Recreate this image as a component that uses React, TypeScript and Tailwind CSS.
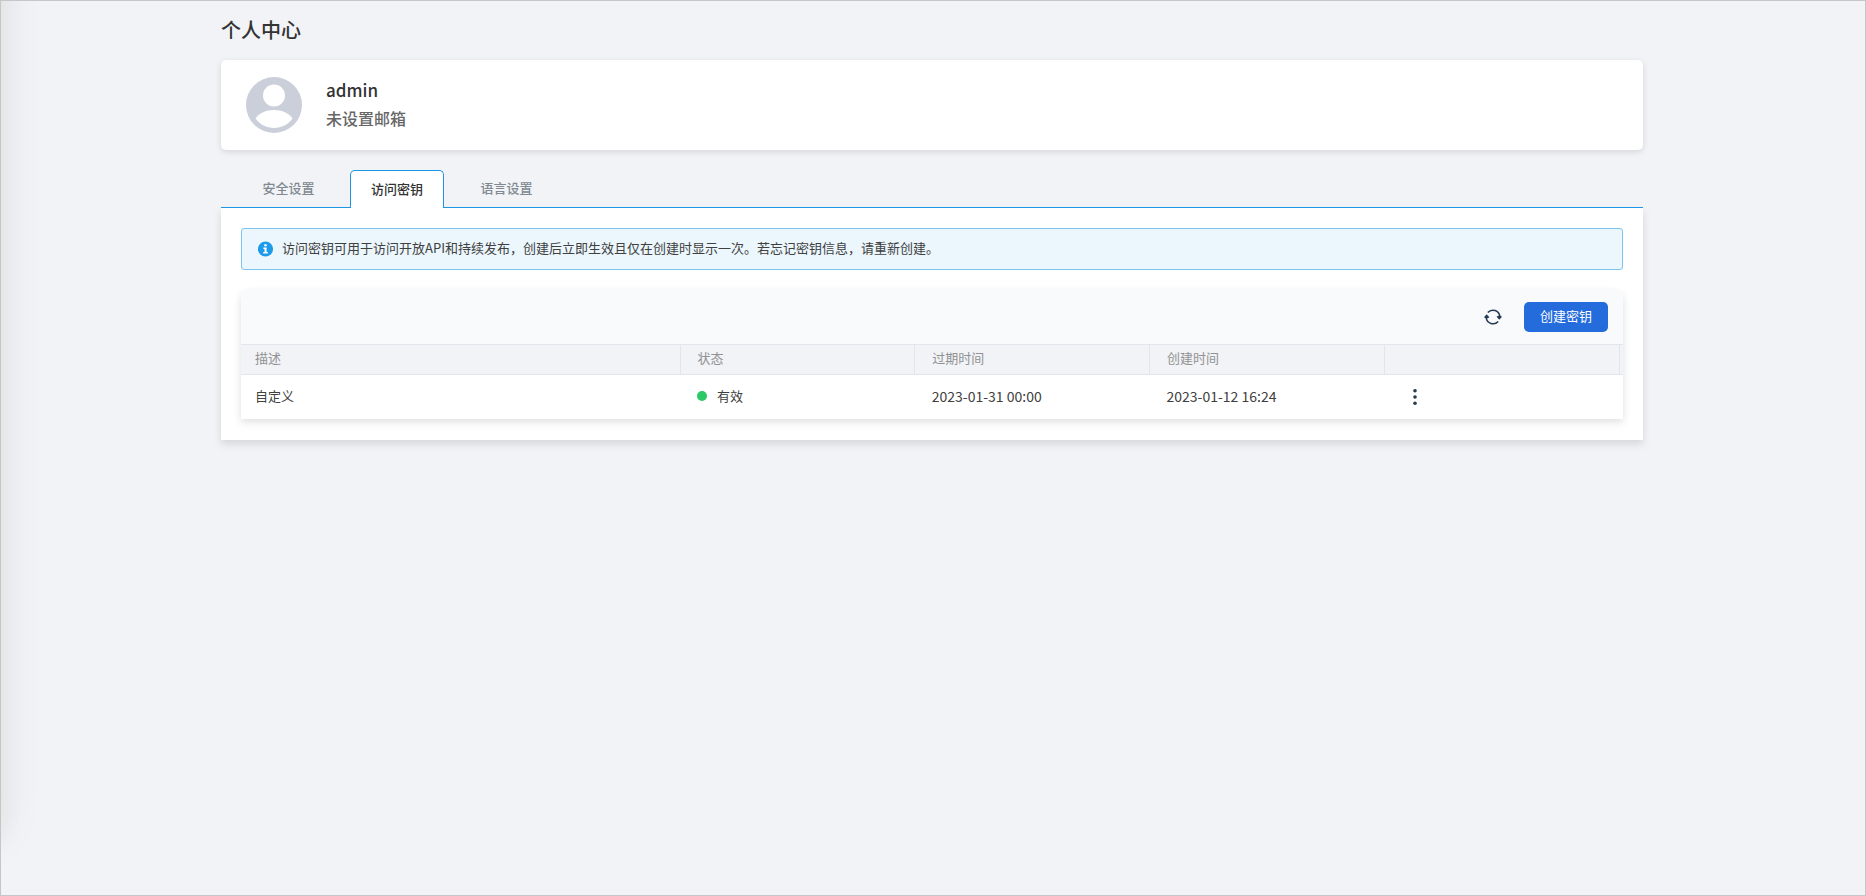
import React from 'react';

const tabs = [
  { id: 'security', label: '安全设置', className: 'w-[129px] pl-1.5' },
  { id: 'keys', label: '访问密钥', className: 'w-[94px]' },
  { id: 'language', label: '语言设置', className: 'w-[125px]' },
];

const keys = [
  { description: '自定义', status: '有效', expires: '2023-01-31 00:00', created: '2023-01-12 16:24' },
];

function AvatarIcon() {
  return (
    <svg viewBox="0 0 56 56" className="size-14 shrink-0" aria-hidden="true">
      <circle cx="28" cy="28" r="28" fill="#cacfd9" />
      <circle cx="28" cy="18.500" r="11" fill="#fff" />
      <path d="M9.500 41.500C13 36 20 33 28 33s15 3 18.500 8.500C42 47.500 35.500 51 28 51S14 47.500 9.500 41.500Z" fill="#fff" />
    </svg>
  );
}

function InfoIcon() {
  return (
    <svg viewBox="0 0 16 16" className="size-4 shrink-0" aria-hidden="true">
      <circle cx="7.500" cy="8" r="7.600" fill="#1d9aea" />
      <circle cx="7.500" cy="4.300" r="1.300" fill="#fff" />
      <path d="M5.400 6.500h3.200v4.400h1.200v1.500H5.200v-1.500h1.300V8H5.400Z" fill="#fff" />
    </svg>
  );
}

function RefreshIcon() {
  return (
    <svg viewBox="0 0 18 18" className="size-[18px]" aria-hidden="true">
      <g fill="none" stroke="#253b52" strokeWidth="1.500">
        <path d="M2.200 9.500A6.900 6.900 0 0 0 14.200 13.500M15.800 8.500A6.900 6.900 0 0 0 3.800 4.500" />
      </g>
      <path d="M0 9.200 2.700 6.200 5.400 9.200 3.900 10.200H1.500ZM12.600 8.800 14.100 7.800H16.500L18 8.800 15.300 11.800Z" fill="#253b52" />
    </svg>
  );
}

function MoreIcon() {
  return (
    <svg viewBox="0 0 4 16" className="h-4 w-1" fill="#253b52" aria-hidden="true">
      <circle cx="2" cy="1.800" r="1.800" />
      <circle cx="2" cy="8" r="1.800" />
      <circle cx="2" cy="14.200" r="1.800" />
    </svg>
  );
}

export default function App() {
  return (
    <div className="relative min-h-screen overflow-hidden border border-[#c6c6c6] bg-[#f1f3f7] pr-0.5 font-['Noto_Sans_CJK_SC',sans-serif] text-[13px] leading-5 text-[#404040]">
      <aside className="absolute top-[-60px] bottom-[60px] -left-20 w-20 shadow-[0_0_48px_rgba(60,45,0,0.07),0_0_24px_rgba(60,45,0,0.06)]" aria-hidden="true" />
      <main className="relative mx-auto max-w-[1422px]">
        <h1 className="pt-[14px] pb-[15px] text-xl leading-[30px] font-medium text-[#333]">个人中心</h1>

        <section className="flex h-[90px] items-center gap-6 rounded-[5px] bg-white px-[25px] shadow-[0_2px_6px_rgba(0,0,0,0.12)]">
          <AvatarIcon />
          <div className="pb-0.5 font-medium">
            <p className="text-[17px] leading-7 text-[#333]">admin</p>
            <p className="text-base leading-7 text-[#666]">未设置邮箱</p>
          </div>
        </section>

        <div role="tablist" className="relative z-10 mt-5 flex h-[38px] border-b border-[#1e96e6]">
          {tabs.map((tab) => {
            const active = tab.id === 'keys';
            return (
              <button
                key={tab.id}
                type="button"
                role="tab"
                aria-selected={active}
                className={`${tab.className} pb-0.5 font-medium ${
                  active
                    ? 'h-[38px] rounded-t-[5px] border border-b-0 border-[#1e96e6] bg-white text-[#333]'
                    : 'h-[37px] text-[#808890]'
                }`}
              >
                {tab.label}
              </button>
            );
          })}
        </div>

        <section role="tabpanel" className="bg-white px-5 pt-5 pb-[21px] shadow-[0_4px_8px_rgba(0,0,0,0.12)]">
          <div className="flex h-[42px] items-center gap-2 rounded-[3px] border border-[#7cc5f0] bg-[#ebf6fd] px-4">
            <InfoIcon />
            <p className="pb-0.5">访问密钥可用于访问开放API和持续发布，创建后立即生效且仅在创建时显示一次。若忘记密钥信息，请重新创建。</p>
          </div>

          <div className="mt-5 rounded-t-lg shadow-[0_3px_8px_rgba(0,0,0,0.13)]">
            <div className="flex h-[54px] items-center justify-end gap-[22px] rounded-t-lg bg-[#f9fafc] pr-[15px]">
              <button type="button" aria-label="刷新">
                <RefreshIcon />
              </button>
              <button type="button" className="h-[30px] rounded-[5px] bg-[#246bdc] px-4 pb-0.5 text-white">
                创建密钥
              </button>
            </div>
            <table className="w-full table-fixed text-left">
              <colgroup>
                <col className="w-[439px]" />
                <col />
                <col />
                <col />
                <col />
                <col className="w-1" />
              </colgroup>
              <thead>
                <tr className="h-[30px] border-y border-[#e2e5ee] bg-[#f1f3f7] text-[#929292] [&>th]:border-r [&>th]:border-[#e2e5ee] [&>th]:pb-1 [&>th]:font-normal">
                  <th scope="col" className="pl-[14px]">描述</th>
                  <th scope="col" className="pl-[17px]">状态</th>
                  <th scope="col" className="pl-[17px]">过期时间</th>
                  <th scope="col" className="pl-[17px]">创建时间</th>
                  <td className="border-r border-[#e2e5ee]" />
                  <td />
                </tr>
              </thead>
              <tbody>
                {keys.map((key) => (
                  <tr key={key.created} className="h-11 bg-white">
                    <td className="pb-0.5 pl-[14px]">{key.description}</td>
                    <td className="pb-0.5 pl-[17px]">
                      <span className="flex items-center gap-[10px]">
                        <span className="size-[10px] rounded-full bg-[#2bc866]" />
                        {key.status}
                      </span>
                    </td>
                    <td className="pb-0.5 pl-[17px] text-sm">{key.expires}</td>
                    <td className="pb-0.5 pl-[17px] text-sm">{key.created}</td>
                    <td className="pl-[29px]">
                      <button type="button" aria-label="更多操作" className="flex">
                        <MoreIcon />
                      </button>
                    </td>
                    <td />
                  </tr>
                ))}
              </tbody>
            </table>
          </div>
        </section>
      </main>
    </div>
  );
}
